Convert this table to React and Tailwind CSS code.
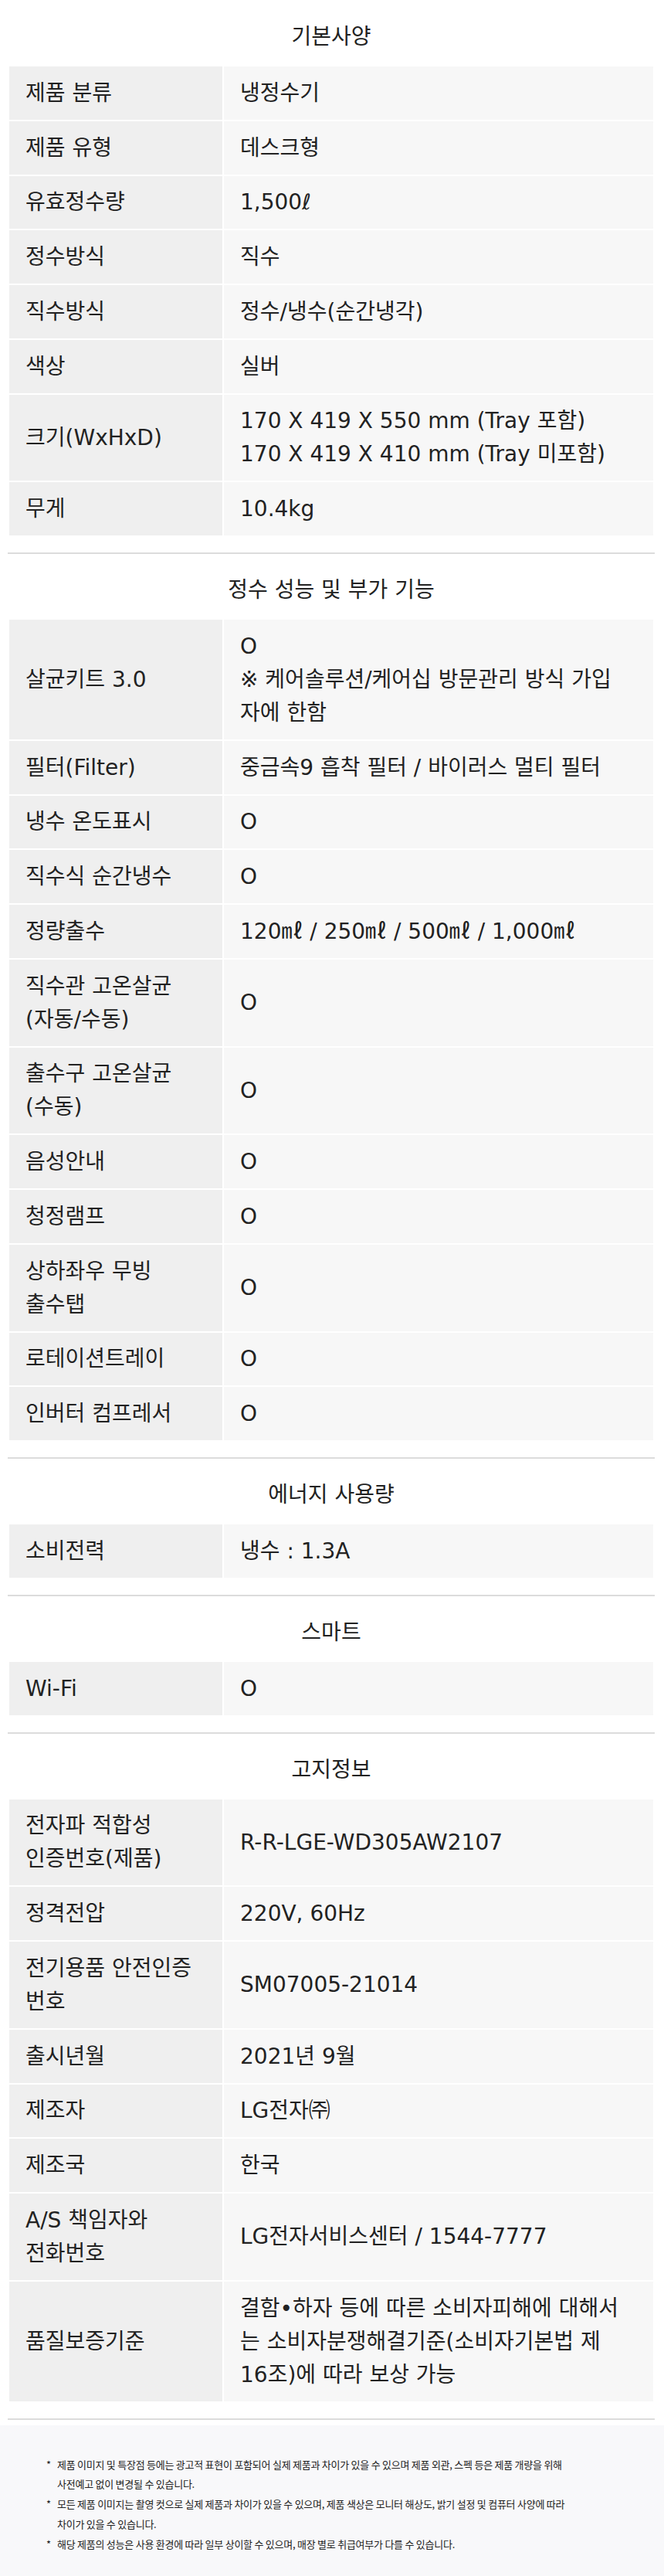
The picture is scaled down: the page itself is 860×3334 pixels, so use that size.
import React from "react";

const sections = [
  {
    title: "기본사양",
    rows: [
      [["제품 분류"], ["냉정수기"]],
      [["제품 유형"], ["데스크형"]],
      [["유효정수량"], ["1,500ℓ"]],
      [["정수방식"], ["직수"]],
      [["직수방식"], ["정수/냉수(순간냉각)"]],
      [["색상"], ["실버"]],
      [["크기(WxHxD)"], ["170 X 419 X 550 mm (Tray 포함)", "170 X 419 X 410 mm (Tray 미포함)"]],
      [["무게"], ["10.4kg"]],
    ],
  },
  {
    title: "정수 성능 및 부가 기능",
    rows: [
      [["살균키트 3.0"], ["O", "※ 케어솔루션/케어십 방문관리 방식 가입", "자에 한함"]],
      [["필터(Filter)"], ["중금속9 흡착 필터 / 바이러스 멀티 필터"]],
      [["냉수 온도표시"], ["O"]],
      [["직수식 순간냉수"], ["O"]],
      [["정량출수"], ["120㎖ / 250㎖ / 500㎖ / 1,000㎖"]],
      [["직수관 고온살균", "(자동/수동)"], ["O"]],
      [["출수구 고온살균", "(수동)"], ["O"]],
      [["음성안내"], ["O"]],
      [["청정램프"], ["O"]],
      [["상하좌우 무빙", "출수탭"], ["O"]],
      [["로테이션트레이"], ["O"]],
      [["인버터 컴프레서"], ["O"]],
    ],
  },
  {
    title: "에너지 사용량",
    rows: [[["소비전력"], ["냉수 : 1.3A"]]],
  },
  {
    title: "스마트",
    rows: [[["Wi-Fi"], ["O"]]],
  },
  {
    title: "고지정보",
    rows: [
      [["전자파 적합성", "인증번호(제품)"], ["R-R-LGE-WD305AW2107"]],
      [["정격전압"], ["220V, 60Hz"]],
      [["전기용품 안전인증", "번호"], ["SM07005-21014"]],
      [["출시년월"], ["2021년 9월"]],
      [["제조자"], ["LG전자㈜"]],
      [["제조국"], ["한국"]],
      [["A/S 책임자와", "전화번호"], ["LG전자서비스센터 / 1544-7777"]],
      [["품질보증기준"], ["결함•하자 등에 따른 소비자피해에 대해서", "는 소비자분쟁해결기준(소비자기본법 제", "16조)에 따라 보상 가능"]],
    ],
  },
];

const notes = [
  [
    "제품 이미지 및 특장점 등에는 광고적 표현이 포함되어 실제 제품과 차이가 있을 수 있으며 제품 외관, 스펙 등은 제품 개량을 위해",
    "사전예고 없이 변경될 수 있습니다.",
  ],
  [
    "모든 제품 이미지는 촬영 컷으로 실제 제품과 차이가 있을 수 있으며, 제품 색상은 모니터 해상도, 밝기 설정 및 컴퓨터 사양에 따라",
    "차이가 있을 수 있습니다.",
  ],
  ["해당 제품의 성능은 사용 환경에 따라 일부 상이할 수 있으며, 매장 별로 취급여부가 다를 수 있습니다."],
];

function Lines({ lines }) {
  return (
    <div>
      {lines.map((l, i) => (
        <div key={i}>{l}</div>
      ))}
    </div>
  );
}

function Row({ label, value }) {
  return (
    <div className="flex gap-[2px]">
      <div className="w-[276px] shrink-0 bg-[#efefef] pl-[21px] pr-[6px] py-[12.875px] flex items-center leading-[43px] whitespace-nowrap">
        <Lines lines={label} />
      </div>
      <div className="flex-1 bg-[#f7f7f7] pl-[21px] pr-[6px] py-[12.875px] flex items-center leading-[43px] whitespace-nowrap">
        <Lines lines={value} />
      </div>
    </div>
  );
}

export default function App() {
  return (
    <div className="w-[860px] bg-white text-[#222] font-['DejaVu_Sans','Noto_Sans_CJK_KR',sans-serif]">
      {sections.map((s, i) => (
        <section
          key={s.title}
          className={
            i === 0
              ? "ml-[10px] mr-[12px] pt-[26px] pb-[22px] border-b-2 border-[#dcdcdc]"
              : "ml-[10px] mr-[12px] pt-[25px] pb-[22px] border-b-2 border-[#dcdcdc]"
          }
        >
          <h2 className="text-center text-[28px] leading-[43px] mb-[17px] font-normal">{s.title}</h2>
          <div className="mx-[2px] flex flex-col gap-[2px] text-[28px]">
            {s.rows.map((r, j) => (
              <Row key={j} label={r[0]} value={r[1]} />
            ))}
          </div>
        </section>
      ))}
      <footer className="mt-[7px] bg-[#f8f8fa] pl-[60px] pt-[38px] pb-[29px] text-[13px] leading-[25.75px] tracking-[-0.25px] text-[#222] font-['Noto_Sans_CJK_KR',sans-serif]">
        {notes.map((n, i) => (
          <div key={i} className="flex">
            <span className="w-[14px] shrink-0">*</span>
            <div className="whitespace-nowrap">
              {n.map((l, k) => (
                <div key={k}>{l}</div>
              ))}
            </div>
          </div>
        ))}
      </footer>
    </div>
  );
}
